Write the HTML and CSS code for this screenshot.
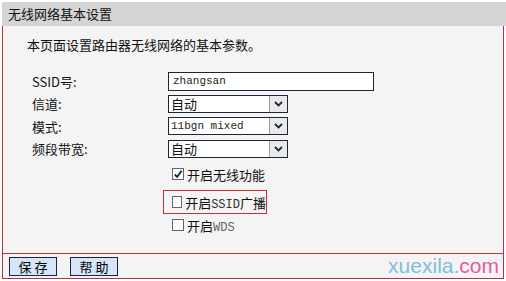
FILE: index.html
```html
<!doctype html>
<html lang="zh-CN">
    <head>
        <meta charset="UTF-8" />
        <title>无线网络基本设置</title>
        <link rel="stylesheet" href="styles.css">
    </head>
    <body>
        <div class="page">
            <div class="title">无线网络基本设置</div>
            <div class="panel">
                <p class="intro">本页面设置路由器无线网络的基本参数。</p>

                <div class="row">
                    <label class="lbl">SSID号:</label>
                    <input class="text mono" type="text" value="zhangsan" />
                </div>
                <div class="row">
                    <label class="lbl">信道:</label>
                    <span class="sel"><span class="val">自动</span><span class="arrow"><svg width="9" height="6" viewBox="0 0 9 6"><path d="M1 1 L4.5 4.5 L8 1" fill="none" stroke="#1b2735" stroke-width="1.8"/></svg></span></span>
                </div>
                <div class="row">
                    <label class="lbl">模式:</label>
                    <span class="sel"><span class="val mono">11bgn mixed</span><span class="arrow"><svg width="9" height="6" viewBox="0 0 9 6"><path d="M1 1 L4.5 4.5 L8 1" fill="none" stroke="#1b2735" stroke-width="1.8"/></svg></span></span>
                </div>
                <div class="row">
                    <label class="lbl">频段带宽:</label>
                    <span class="sel"><span class="val">自动</span><span class="arrow"><svg width="9" height="6" viewBox="0 0 9 6"><path d="M1 1 L4.5 4.5 L8 1" fill="none" stroke="#1b2735" stroke-width="1.8"/></svg></span></span>
                </div>

                <div class="checks">
                    <label class="chk"><span class="box"><svg width="11" height="11" viewBox="0 0 11 11"><path d="M2 5.5 L4.5 8 L9.5 1.5" fill="none" stroke="#1b2735" stroke-width="2"/></svg></span><span>开启无线功能</span></label>
                    <label class="chk marked"><span class="box"></span><span>开启<span class="code">SSID</span>广播</span></label>
                    <label class="chk"><span class="box"></span><span>开启<span class="code gray">WDS</span></span></label>
                </div>
            </div>
            <div class="footer">
                <button class="btn">保 存</button>
                <button class="btn">帮 助</button>
                <span class="mark">xuexila.<em>com</em></span>
            </div>
        </div>
    </body>
</html>
```

FILE: styles.css
```css
body {
    margin: 0;
    padding-top: 2px;
    background: #ffffff;
    font-family: "Noto Sans CJK SC", "Liberation Sans", sans-serif;
    font-size: 13px;
    color: #111;
}
.page {
    margin-left: 2px;
}
.title {
    height: 24px;
    line-height: 24px;
    padding-left: 6px;
    background: #d5d5d5;
    font-size: 13px;
}
.panel {
    width: 502px;
    height: 227px;
    box-sizing: border-box;
    background: #f4f4f4;
    border-left: 1px solid #b5343c;
    border-right: 1px solid #b5343c;
    padding-top: 10px;
}
.intro {
    margin: 0 0 16px 24px;
    line-height: 18px;
}
.row {
    display: flex;
    align-items: center;
    height: 22.5px;
    padding-left: 29px;
}
.lbl {
    width: 136px;
}
.mono {
    font-family: "Liberation Mono", "DejaVu Sans Mono", monospace;
    font-size: 11px;
}
.code {
    font-family: "Liberation Mono", "DejaVu Sans Mono", monospace;
    font-size: 12px;
    color: #333;
}
.text {
    width: 206px;
    height: 19px;
    box-sizing: border-box;
    border: 1px solid #1b2735;
    background: #fff;
    padding: 0 4px;
    margin: 0;
    color: #222;
}
.sel {
    display: flex;
    width: 120px;
    height: 18px;
    box-sizing: border-box;
    border: 1px solid #1b2735;
    background: #fff;
}
.val {
    flex: 1;
    line-height: 16px;
    padding-left: 2px;
}
.val.mono {
    color: #222;
}
.arrow {
    width: 17px;
    display: flex;
    align-items: center;
    justify-content: center;
    background: #e9e9e9;
    border-left: 1px solid #9aa0a6;
}
.checks {
    display: flex;
    flex-direction: column;
    align-items: flex-start;
    padding-left: 160px;
    margin-top: 4px;
}
.chk {
    display: flex;
    align-items: center;
    gap: 3px;
    height: 20px;
    padding-left: 9px;
    box-sizing: border-box;
    white-space: nowrap;
}
.chk.marked {
    height: 24px;
    width: 104px;
    margin: 6px 0 1px;
    border: 1px solid #c0323c;
    padding-left: 8px;
}
.box {
    width: 12px;
    height: 12px;
    box-sizing: border-box;
    border: 1px solid #5d6671;
    background: #fff;
    display: flex;
    align-items: center;
    justify-content: center;
}
.gray {
    color: #666;
}
.footer {
    display: flex;
    align-items: center;
    width: 502px;
    height: 26px;
    box-sizing: border-box;
    border: 1px solid #b5343c;
    background: #f4f4f4;
    padding-left: 6px;
}
.btn {
    width: 48px;
    height: 19px;
    padding: 0;
    margin-right: 13px;
    background: #d6e6f8;
    border: 1px solid #1b2735;
    font-family: "Noto Sans CJK SC", sans-serif;
    font-size: 13px;
    line-height: 17px;
}
.mark {
    margin-left: auto;
    margin-right: 4px;
    font-family: "Liberation Sans", Arial, sans-serif;
    font-size: 21px;
    color: #82bcdc;
}
.mark em {
    font-style: normal;
    color: #ea5aa0;
}
```
